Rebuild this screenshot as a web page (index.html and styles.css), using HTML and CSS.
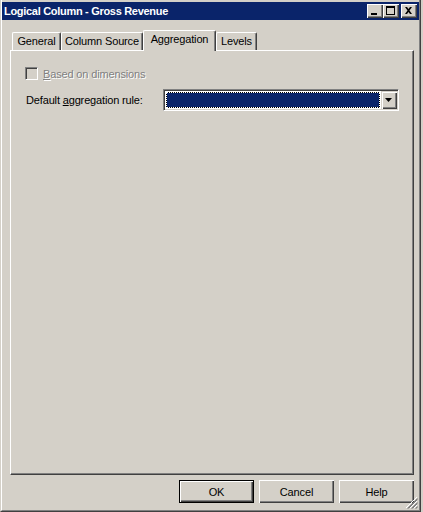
FILE: index.html
```html
<!DOCTYPE html>
<html>
<head>
<meta charset="utf-8">
<link rel="stylesheet" href="styles.css">
</head>
<body>
<div class="window">
  <div class="frame">
    <div class="titlebar">
      <span class="title">Logical Column - Gross Revenue</span>
      <div class="caption-btns">
        <span class="cbtn"><svg width="16" height="14" viewBox="0 0 16 14"><rect x="4" y="9" width="6" height="2" fill="#000"/></svg></span>
        <span class="cbtn"><svg width="16" height="14" viewBox="0 0 16 14"><path d="M3 2h9v9h-9z M4 4v6h7v-6z" fill="#000" fill-rule="evenodd"/></svg></span>
        <span class="cbtn close"><svg width="16" height="14" viewBox="0 0 16 14"><path d="M4 3h2l1.5 2 1.5-2h2l-2.5 3.5 2.5 3.5h-2l-1.5-2-1.5 2h-2l2.5-3.5z" fill="#000"/></svg></span>
      </div>
    </div>
    <div class="content">
      <div class="tabs">
        <div class="tab w-general">General</div>
        <div class="tab w-source">Column Source</div>
        <div class="tab active w-agg">Aggregation</div>
        <div class="tab w-levels">Levels</div>
      </div>
      <div class="panel">
        <div class="check-row">
          <span class="checkbox"></span>
          <span class="disabled-text"><u>B</u>ased on dimensions</span>
        </div>
        <div class="combo-row">
          <span class="combo-label">Default <u>a</u>ggregation rule:</span>
          <div class="combo">
            <div class="combo-field"><div class="combo-sel"></div></div>
            <span class="combo-btn"><svg width="16" height="18" viewBox="0 0 16 18"><path d="M4 7h7l-3.5 4z" fill="#000"/></svg></span>
          </div>
        </div>
      </div>
      <div class="buttons">
        <span class="btn default">OK</span>
        <span class="btn">Cancel</span>
        <span class="btn">Help</span>
      </div>
    </div>
    <svg class="grip" width="12" height="12" viewBox="0 0 12 12">
      <path d="M11 0L0 11 M11 4L4 11 M11 8L8 11" stroke="#fff" stroke-width="1"/>
      <path d="M11.5 1.5L1.5 11.5 M11.5 2.5L2.5 11.5 M11.5 5.5L5.5 11.5 M11.5 6.5L6.5 11.5 M11.5 9.5L9.5 11.5 M11.5 10.5L10.5 11.5" stroke="#808080" stroke-width="1"/>
    </svg>
  </div>
</div>
</body>
</html>
```
FILE: styles.css
```css
html, body {
  margin: 0;
  padding: 0;
}
body {
  width: 423px;
  height: 512px;
  overflow: hidden;
  background: #d4d0c8;
  font-family: "Liberation Sans", Arial, sans-serif;
  font-size: 11px;
  letter-spacing: -0.15px;
  color: #000;
}
.window {
  width: 421px;
  height: 512px;
  box-sizing: border-box;
  border-left: 1px solid #d4d0c8;
  border-right: 1px solid #404040;
  border-bottom: 1px solid #404040;
}
.frame {
  position: relative;
  height: 100%;
  box-sizing: border-box;
  border-left: 1px solid #fff;
  border-right: 1px solid #808080;
  border-bottom: 1px solid #808080;
  padding-top: 2px;
}
.titlebar {
  height: 18px;
  background: #0a246a;
  display: flex;
  align-items: center;
  justify-content: space-between;
  padding: 0 2px 0 2px;
}
.title {
  color: #fff;
  font-weight: bold;
  font-size: 11px;
  letter-spacing: -0.3px;
}
.caption-btns {
  display: flex;
  gap: 0;
}
.cbtn {
  width: 16px;
  height: 14px;
  background: #d4d0c8;
  box-shadow: inset 1px 1px #fff, inset -1px -1px #404040, inset -2px -2px #808080;
  display: block;
}
.cbtn svg { display: block; }
.cbtn.close { margin-left: 2px; }
.content {
  padding: 0 5px 0 8px;
}
.tabs {
  display: flex;
  align-items: flex-end;
  height: 20px;
  margin-top: 10px;
  padding-left: 2px;
}
.tab {
  box-sizing: border-box;
  height: 18px;
  border-top: 1px solid #fff;
  border-left: 1px solid #fff;
  border-right: 1px solid #404040;
  box-shadow: inset -1px 0 #808080;
  border-top-left-radius: 2px;
  border-top-right-radius: 2px;
  text-align: center;
  line-height: 16px;
  background: #d4d0c8;
}
.tab.active {
  height: 21px;
  margin-bottom: -1px;
  position: relative;
  z-index: 1;
  line-height: 17px;
}
.w-general { width: 49px; }
.w-source { width: 82px; }
.w-agg { width: 73px; }
.w-levels { width: 41px; }
.panel {
  box-sizing: border-box;
  height: 425px;
  border-top: 1px solid #fff;
  border-left: 1px solid #fff;
  border-right: 1px solid #404040;
  border-bottom: 1px solid #404040;
  box-shadow: inset -1px -1px #808080;
  padding: 16px 14px 0 14px;
}
.check-row {
  display: flex;
  align-items: center;
  height: 13px;
  gap: 5px;
}
.checkbox {
  box-sizing: border-box;
  width: 13px;
  height: 13px;
  border-top: 1px solid #808080;
  border-left: 1px solid #808080;
  border-right: 1px solid #fff;
  border-bottom: 1px solid #fff;
  box-shadow: inset 1px 1px #404040, inset -1px -1px #d4d0c8;
  background: #d4d0c8;
}
.disabled-text {
  color: #808080;
  text-shadow: 1px 1px 0 #fff;
}
.combo-row {
  display: flex;
  align-items: center;
  margin-top: 9px;
}
.combo-label {
  width: 138px;
  padding-left: 1px;
  box-sizing: border-box;
}
.combo {
  box-sizing: border-box;
  width: 237px;
  height: 22px;
  display: flex;
  border-top: 1px solid #808080;
  border-left: 1px solid #808080;
  border-right: 1px solid #fff;
  border-bottom: 1px solid #fff;
  box-shadow: inset 1px 1px #404040, inset -1px -1px #d4d0c8;
  padding: 1px;
  background: #fff;
}
.combo-field {
  flex: 1;
  box-sizing: border-box;
  margin: 1px;
  border: 1px dotted #fff;
  background: #000;
}
.combo-sel {
  height: 100%;
  background: #0a246a;
}
.combo-btn {
  width: 16px;
  height: 18px;
  box-sizing: border-box;
  background: #d4d0c8;
  box-shadow: inset 1px 1px #d4d0c8, inset 2px 2px #fff, inset -1px -1px #404040, inset -2px -2px #808080;
}
.combo-btn svg { display: block; }
.buttons {
  display: flex;
  justify-content: flex-end;
  gap: 5px;
  margin-top: 5px;
}
.btn {
  box-sizing: border-box;
  width: 75px;
  height: 23px;
  display: flex;
  align-items: center;
  justify-content: center;
  background: #d4d0c8;
  box-shadow: inset 1px 1px #fff, inset -1px -1px #404040, inset -2px -2px #808080;
}
.btn.default {
  border: 1px solid #000;
}
.grip {
  position: absolute;
  right: 1px;
  bottom: 1px;
}
```
